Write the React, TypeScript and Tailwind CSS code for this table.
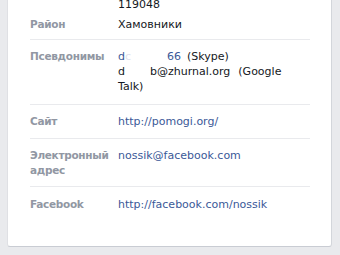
const Row = ({
  label,
  children,
  className,
}: {
  label?: string;
  children: React.ReactNode;
  className?: string;
}) => (
  <div className={`flex ${className ?? ""}`}>
    <div className="w-[88px] shrink-0 pr-[6px] font-bold text-[10.5px] tracking-[-0.3px] text-[#9197a3]">
      {label}
    </div>
    <div className="flex-1 text-[#141823]">{children}</div>
  </div>
);

const App = () => {
  return (
    <div className="w-[340px] h-[255px] overflow-hidden bg-[#e9eaed] font-['DejaVu_Sans',sans-serif] text-[11px] leading-[15px]">
      <div className="ml-[7px] mt-[-5px] w-[325px] bg-white border border-[#dfe0e4] border-b-[#c9ccd3] border-r-[#d3d6db] rounded-b-[3px] pl-[22px] pr-[21px]">
        <Row className="pt-[1px]">119048</Row>
        <Row label="Район" className="pt-[5px] pb-[7px] border-b border-[#e9eaed]">
          Хамовники
        </Row>
        <Row label="Псевдонимы" className="pt-[9px] pb-[10px] border-b border-[#e9eaed]">
          <div>
            <span className="text-[#3b5998]">d</span>
            <span className="text-[#dfe3ee]">c</span>
            <span className="inline-block w-[36px]" />
            <span className="text-[#3b5998]">66</span>
            <span className="ml-[6px]">(Skype)</span>
          </div>
          <div>
            d<span className="inline-block w-[25px]" />b@zhurnal.org
            <span className="ml-[8px]">(Google</span>
          </div>
          <div>Talk)</div>
        </Row>
        <Row label="Сайт" className="pt-[9px] pb-[9px] border-b border-[#e9eaed]">
          <span className="text-[#3b5998]">http://pomogi.org/</span>
        </Row>
        <Row label="Электронный адрес" className="pt-[9px] pb-[8px] border-b border-[#e9eaed]">
          <span className="text-[#3b5998]">nossik@facebook.com</span>
        </Row>
        <Row label="Facebook" className="pt-[10px] pb-[34px]">
          <span className="text-[#3b5998]">http://facebook.com/nossik</span>
        </Row>
      </div>
    </div>
  );
};

export default App;
